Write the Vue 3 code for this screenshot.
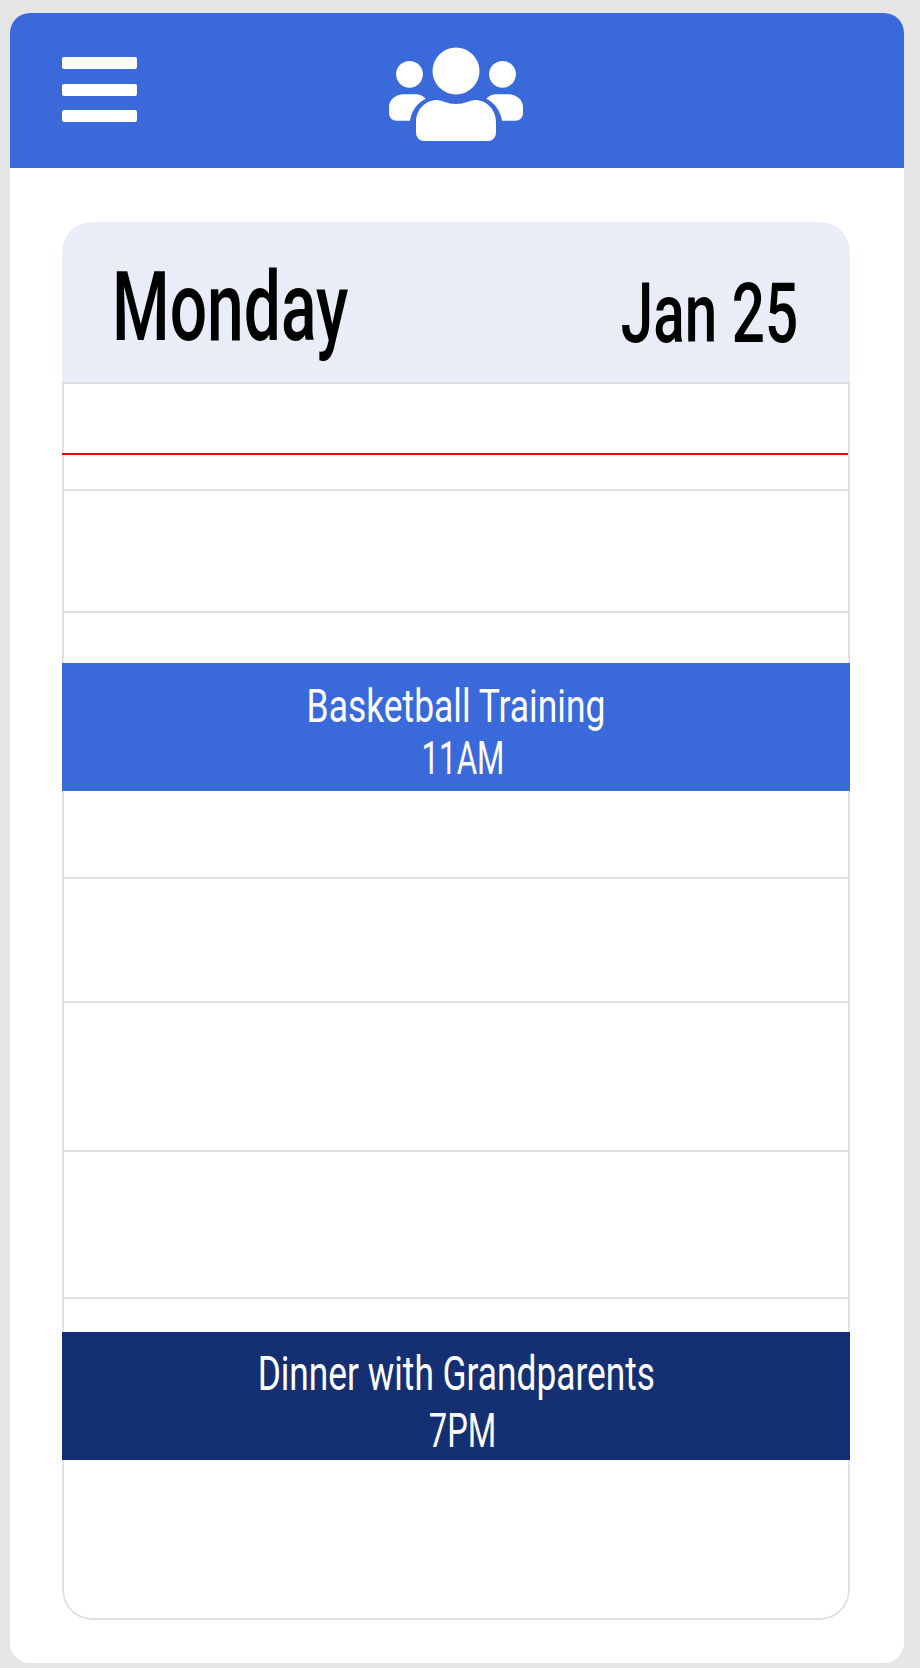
<template>
  <div class="page">
    <div class="phone">
      <header class="topbar">
        <div class="burger">
          <span></span>
          <span></span>
          <span></span>
        </div>
        <svg class="group-icon" viewBox="0 0 134 94" fill="#fff">
          <circle cx="67" cy="24" r="23.5" />
          <circle cx="20.5" cy="27.3" r="13.4" />
          <circle cx="113.5" cy="27.3" r="13.4" />
          <path d="M27 75C27 62 37 53 48 53C53 53 58 57 67 57C76 57 81 53 86 53C97 53 107 62 107 75V86A8 8 0 0 1 99 94H35A8 8 0 0 1 27 86Z" />
          <path d="M14.7 47.3H27C31 47.3 34 49 36.7 51.7C28 56 22.5 64 21 73.7H7.5A7.5 7 0 0 1 0 66.7V60C0 53 6.5 47.3 14.7 47.3Z" />
          <path d="M119.3 47.3H107C103 47.3 100 49 97.3 51.7C106 56 111.5 64 113 73.7H126.5A7.5 7 0 0 0 134 66.7V60C134 53 127.5 47.3 119.3 47.3Z" />
        </svg>
      </header>

      <main class="content">
        <section class="day">
          <div class="day-head">
            <span class="day-name">Monday</span>
            <span class="day-date">Jan 25</span>
          </div>

          <div class="hours">
            <div v-for="(h, i) in rows" :key="i" class="row" :style="{ height: h + 'px' }"></div>
            <div class="now-line"></div>

            <div class="event event-light">
              <div class="ev-title"><span>Basketball Training</span></div>
              <div class="ev-time"><span>11AM</span></div>
            </div>
            <div class="event event-dark">
              <div class="ev-title"><span>Dinner with Grandparents</span></div>
              <div class="ev-time"><span>7PM</span></div>
            </div>
          </div>
        </section>
      </main>
    </div>
  </div>
</template>

<script setup>
const rows = [107, 122, 266, 124, 149, 147]
</script>

<style scoped>
.page {
  height: 1668px;
  padding: 13px 16px 5px 10px;
  box-sizing: border-box;
  background: #e5e5e5;
  font-family: Roboto, 'Liberation Sans', sans-serif;
}

.phone {
  height: 100%;
  background: #fff;
  border-radius: 20px;
  overflow: hidden;
}

.topbar {
  height: 155px;
  background: #3a6ada;
  display: flex;
  align-items: flex-start;
  padding: 34px 0 0 52px;
  box-sizing: border-box;
}

.burger {
  display: flex;
  flex-direction: column;
  gap: 14.5px;
  margin-top: 10px;
  width: 75px;
}

.burger span {
  height: 12px;
  background: #fff;
  border-radius: 2px;
}

.group-icon {
  width: 134px;
  height: 94px;
  margin-left: 252px;
}

.content {
  padding: 54px 54px 0 52px;
}

.day {
  border-radius: 30px;
  overflow: hidden;
}

.day-head {
  height: 160px;
  background: #e9edf8;
  display: flex;
  justify-content: space-between;
  padding: 0 52px 0 50px;
  color: #000;
  line-height: 1;
  font-weight: 500;
}

.day-name {
  font-size: 97px;
  margin-top: 37px;
  transform: scaleX(0.68);
  transform-origin: left top;
}

.day-date {
  font-size: 84px;
  margin-top: 50px;
  transform: scaleX(0.695);
  transform-origin: right top;
}

.hours {
  position: relative;
  height: 1238px;
  border: 2px solid #e0e0e0;
  border-radius: 0 0 30px 30px;
  box-sizing: border-box;
}

.row {
  border-bottom: 2px solid #e0e0e0;
  box-sizing: border-box;
}

.now-line {
  position: absolute;
  top: 69px;
  left: -2px;
  right: 0;
  height: 2px;
  background: #f00;
}

.event {
  position: absolute;
  left: -2px;
  right: -2px;
  height: 128px;
  box-sizing: border-box;
  color: #fff;
  text-align: center;
}

.event span {
  display: inline-block;
}

.event-light {
  top: 279px;
  background: #3a6ada;
  padding-top: 17px;
  font-size: 46px;
  line-height: 52px;
}

.event-light .ev-title span {
  transform: scaleX(0.77);
}

.event-dark {
  top: 948px;
  background: #143073;
  padding-top: 13px;
  font-size: 48px;
  line-height: 57px;
}

.event-dark .ev-title span {
  transform: scaleX(0.735);
}

.ev-time {
  padding-left: 14px;
}

.ev-time span {
  transform: scaleX(0.68);
}
</style>

<style>
body {
  background: #e5e5e5;
}
</style>
